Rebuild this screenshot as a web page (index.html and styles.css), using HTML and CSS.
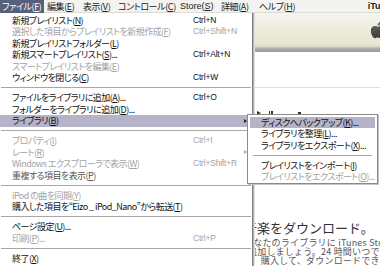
FILE: index.html
```html
<!DOCTYPE html>
<html lang="ja">
<head>
<meta charset="utf-8">
<title>iTunes ファイル メニュー</title>
<link rel="stylesheet" href="styles.css">
</head>
<body>
<div class="screen">
  <div class="menubar">
    <span class="mb-item mb-active">ファイル(<u>F</u>)</span>
    <span class="mb-item mb-edit">編集(<u>E</u>)</span>
    <span class="mb-item mb-view">表示(<u>V</u>)</span>
    <span class="mb-item mb-ctrl">コントロール(<u>C</u>)</span>
    <span class="mb-item mb-store">Store(<u>S</u>)</span>
    <span class="mb-item mb-adv">詳細(<u>A</u>)</span>
    <span class="mb-item mb-help">ヘルプ(<u>H</u>)</span>
    <span class="mb-title">iTunes</span>
  </div>
  <div class="app">
    <div class="toolbar">
      <svg class="apple" viewBox="0 0 17 20" width="15" height="18" aria-hidden="true">
        <defs>
          <linearGradient id="ag" x1="0" y1="0" x2="0" y2="1">
            <stop offset="0" stop-color="#6a6a66"/>
            <stop offset="1" stop-color="#3a3a38"/>
          </linearGradient>
        </defs>
        <path fill="url(#ag)" d="M13.5 10.6c0-2.3 1.9-3.4 2-3.5-1.1-1.6-2.8-1.8-3.4-1.8-1.4-.1-2.8.9-3.5.9-.7 0-1.8-.8-3-.8C4 5.4 2.5 6.3 1.7 7.8c-1.6 2.8-.4 6.9 1.1 9.2.8 1.1 1.7 2.3 2.9 2.3 1.2 0 1.6-.8 3-.8s1.8.8 3 .7c1.2 0 2-1.1 2.8-2.3.9-1.3 1.2-2.5 1.2-2.6 0 0-2.3-.9-2.3-3.6zM11.3 3.7c.6-.8 1.1-1.8 1-2.9-.9 0-2 .6-2.7 1.4-.6.7-1.1 1.8-1 2.8 1 .1 2.1-.5 2.7-1.3z"/>
      </svg>
    </div>
    <div class="toolbar-edge"></div>
    <div class="content">
      <div class="rule"></div>
      <div class="controls">
        <span class="ctl ctl-play"></span>
        <span class="ctl ctl-pause"></span>
        <span class="ctl ctl-stop"></span>
      </div>
      <div class="promo">
        <div class="promo-title">音楽をダウンロード。</div>
        <div class="promo-line l1">あなたのライブラリに iTunes Store の曲を</div>
        <div class="promo-line l2">追加しましょう。24 時間いつでもお好きなときに</div>
        <div class="promo-line l3">き、購入して、ダウンロードできます。</div>
      </div>
    </div>
  </div>

  <div class="menu main-menu">
    <div class="row"><span>新規プレイリスト(<u>N</u>)</span><span class="key">Ctrl+N</span></div>
    <div class="row off"><span>選択した項目からプレイリストを新規作成(<u>F</u>)</span><span class="key">Ctrl+Shift+N</span></div>
    <div class="row"><span>新規プレイリストフォルダー(<u>L</u>)</span></div>
    <div class="row"><span>新規スマートプレイリスト(<u>S</u>)...</span><span class="key">Ctrl+Alt+N</span></div>
    <div class="row off"><span>スマートプレイリストを編集(<u>E</u>)</span></div>
    <div class="row"><span>ウィンドウを閉じる(<u>C</u>)</span><span class="key">Ctrl+W</span></div>
    <div class="sep"></div>
    <div class="row"><span>ファイルをライブラリに追加(<u>A</u>)...</span><span class="key">Ctrl+O</span></div>
    <div class="row"><span>フォルダーをライブラリに追加(<u>D</u>)...</span></div>
    <div class="row hi"><span>ライブラリ(<u>B</u>)</span><span class="arrow"></span></div>
    <div class="sep"></div>
    <div class="row off"><span>プロパティ(<u>I</u>)</span><span class="key">Ctrl+I</span></div>
    <div class="row off"><span>レート(<u>R</u>)</span><span class="arrow"></span></div>
    <div class="row off"><span>Windows エクスプローラで表示(<u>W</u>)</span><span class="key">Ctrl+Shift+R</span></div>
    <div class="row mid"><span>重複する項目を表示(<u>P</u>)</span></div>
    <div class="sep"></div>
    <div class="row off"><span>iPod の曲を同期(<u>Y</u>)</span></div>
    <div class="row"><span>購入した項目を“Eizo _ iPod_Nano”から転送(<u>T</u>)</span></div>
    <div class="sep"></div>
    <div class="row"><span>ページ設定(<u>U</u>)...</span></div>
    <div class="row off"><span>印刷(<u>P</u>)...</span><span class="key">Ctrl+P</span></div>
    <div class="sep"></div>
    <div class="row"><span>終了(<u>X</u>)</span></div>
  </div>

  <div class="menu sub-menu">
    <div class="row hi"><span>ディスクへバックアップ(<u>K</u>)...</span></div>
    <div class="row"><span>ライブラリを整理(<u>L</u>)...</span></div>
    <div class="row"><span>ライブラリをエクスポート(<u>X</u>)...</span></div>
    <div class="sep"></div>
    <div class="row"><span>プレイリストをインポート(<u>I</u>)</span></div>
    <div class="row off"><span>プレイリストをエクスポート(<u>O</u>)...</span></div>
  </div>
</div>
</body>
</html>
```

FILE: styles.css
```css
* { box-sizing: border-box; }

html, body {
  margin: 0;
  padding: 0;
  background: #ffffff;
}

body {
  font-family: "Noto Sans CJK JP", "Noto Sans", sans-serif;
  font-feature-settings: "palt";
  color: #111;
}

.screen {
  position: relative;
  width: 380px;
  height: 266px;
  overflow: hidden;
  display: flex;
  flex-direction: column;
}

u { text-decoration: underline; text-decoration-thickness: 1px; text-underline-offset: 1px; }

/* ---- menubar ---- */
.menubar {
  height: 13px;
  flex: none;
  display: flex;
  align-items: center;
  background: #f3f3f1;
  border-bottom: 1px solid #dcdcd6;
  font-size: 9px;
  letter-spacing: -0.4px;
  line-height: 13px;
  white-space: nowrap;
  color: #222;
}

.mb-item {
  flex: none;
  padding-left: 3px;
  overflow: hidden;
}
.mb-active {
  padding-left: 2px;
  background: #56607c;
  color: #fff;
  width: 44px;
  height: 13px;
}
.mb-edit { width: 36px; }
.mb-view { width: 35px; }
.mb-ctrl { width: 62px; }
.mb-store { width: 41px; font-family: "Liberation Sans", sans-serif; font-size: 9px; letter-spacing: 0; }
.mb-adv { width: 38px; }
.mb-help { width: 40px; }
.mb-title {
  margin-left: auto;
  margin-right: -16px;
  font-family: "Liberation Sans", sans-serif;
  font-weight: bold;
  font-size: 9px;
  letter-spacing: 0;
}

/* ---- app window behind menu ---- */
.app {
  flex: 1;
  display: flex;
  flex-direction: column;
}

.toolbar {
  height: 34px;
  flex: none;
  background: linear-gradient(#f5f5ee 0%, #eeeddf 40%, #e7e6d2 90%, #d9d8c6 100%);
  display: flex;
  justify-content: flex-end;
  align-items: flex-start;
}

.apple {
  margin-top: 8px;
  margin-right: -5px;
}

.toolbar-edge {
  height: 5px;
  flex: none;
  background: linear-gradient(#c9c9c4 0%, #aaaaaa 40%, #9a9a9a 100%);
}

.content {
  flex: 1;
  display: flex;
  flex-direction: column;
  background: #fff;
}

.rule {
  margin-top: 35px;
  height: 1px;
  background: #dedede;
}

.controls {
  margin-top: 23px;
  margin-left: 257px;
  height: 4px;
  display: flex;
  align-items: flex-end;
}

.ctl { display: block; background: #333; }
.ctl-play {
  width: 0; height: 0;
  background: none;
  border-left: 4px solid #333;
  border-top: 2px solid transparent;
  border-bottom: 2px solid transparent;
}
.ctl-pause {
  margin-left: 8px;
  width: 4px; height: 4px;
  background: linear-gradient(90deg, #333 0 1.5px, transparent 1.5px 2.5px, #333 2.5px);
}
.ctl-stop { margin-left: 25px; width: 3px; height: 3px; }

.promo {
  margin-top: 105px;
  margin-left: 244px;
  color: #555;
  white-space: nowrap;
  font-feature-settings: normal;
}
.promo-title {
  font-size: 13px;
  line-height: 15px;
  color: #333;
}
.promo-line {
  font-size: 9px;
  line-height: 9px;
  letter-spacing: 0.2px;
}
.l1 { margin-left: 0; margin-top: 3px; }
.l2 { margin-left: 4px; }
.l3 { margin-left: -1px; }

/* ---- drop down menus ---- */
.menu {
  position: absolute;
  background: #fff;
  font-size: 9px;
  letter-spacing: -0.55px;
  white-space: nowrap;
}

.main-menu {
  left: 0;
  top: 13px;
  width: 253px;
  height: 262px;
  padding-top: 1.5px;
  border-right: 1px solid #7e7e7e;
  box-shadow: 1px 0 0 #b4b4b4, 2px 0 0 #e2e2e2;
}

.row {
  position: relative;
  height: 11.5px;
  line-height: 11.5px;
  display: grid;
  grid-template-columns: 181px 1fr;
  padding-left: 12px;
}

.key {
  font-family: "Liberation Sans", sans-serif;
  font-size: 8.5px;
  letter-spacing: -0.2px;
  font-feature-settings: normal;
}

.off { color: #a3a3a3; }
.mid { color: #575757; }

.hi { background: #b5b3c7; color: #111; }

.arrow {
  position: absolute;
  right: 5px;
  top: 3.5px;
  width: 0; height: 0;
  border-left: 3px solid #222;
  border-top: 2.5px solid transparent;
  border-bottom: 2.5px solid transparent;
}
.off .arrow { border-left-color: #aaa; }

.sep {
  height: 8.5px;
  display: flex;
  align-items: center;
  padding: 0 1px;
}
.sep::before {
  content: "";
  display: block;
  flex: 1;
  height: 1px;
  background: #a7a7a7;
}

.sub-menu {
  left: 247px;
  top: 114px;
  width: 131px;
  height: 70px;
  padding: 1.5px 2px 0 2px;
  border: 1px solid #8a8a8a;
  box-shadow: 1px 1px 0 #c4c4c4;
}
.sub-menu .row {
  grid-template-columns: 1fr;
  padding-left: 11px;
}
.sub-menu .sep { padding: 0 3px; }
```
